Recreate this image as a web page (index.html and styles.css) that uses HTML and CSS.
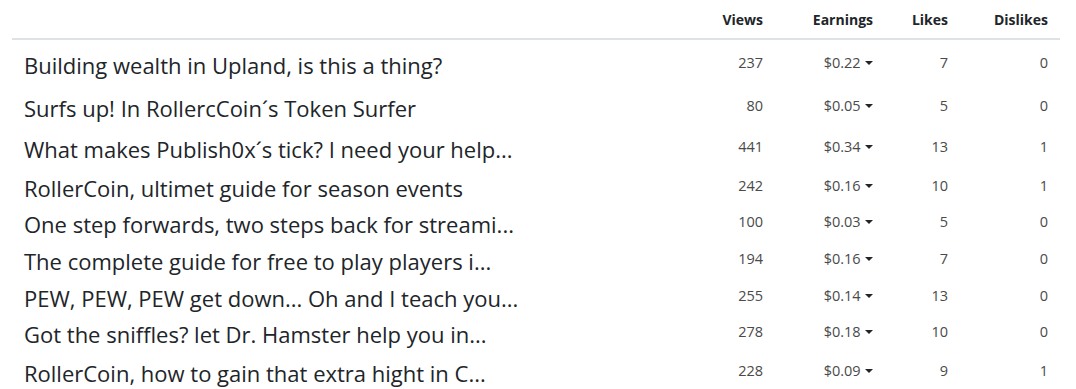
FILE: index.html
```html
<!DOCTYPE html>
<html lang="en">
<head>
<meta charset="utf-8">
<title>Posts</title>
<link rel="stylesheet" href="styles.css">
</head>
<body>
<div class="wrap">
  <table class="stats">
    <colgroup>
      <col class="c-title">
      <col class="c-views">
      <col class="c-earn">
      <col class="c-likes">
      <col class="c-dis">
    </colgroup>
    <thead>
      <tr>
        <th></th>
        <th class="num">Views</th>
        <th class="num">Earnings</th>
        <th class="num">Likes</th>
        <th class="num">Dislikes</th>
      </tr>
    </thead>
    <tbody>
      <tr><td class="title">Building wealth in Upland, is this a thing?</td><td class="num">237</td><td class="num"><span class="earn">$0.22</span></td><td class="num">7</td><td class="num">0</td></tr>
      <tr><td class="title">Surfs up! In RollercCoin´s Token Surfer</td><td class="num">80</td><td class="num"><span class="earn">$0.05</span></td><td class="num">5</td><td class="num">0</td></tr>
      <tr><td class="title">What makes Publish0x´s tick? I need your help...</td><td class="num">441</td><td class="num"><span class="earn">$0.34</span></td><td class="num">13</td><td class="num">1</td></tr>
      <tr><td class="title">RollerCoin, ultimet guide for season events</td><td class="num">242</td><td class="num"><span class="earn">$0.16</span></td><td class="num">10</td><td class="num">1</td></tr>
      <tr><td class="title">One step forwards, two steps back for streami...</td><td class="num">100</td><td class="num"><span class="earn">$0.03</span></td><td class="num">5</td><td class="num">0</td></tr>
      <tr><td class="title">The complete guide for free to play players i...</td><td class="num">194</td><td class="num"><span class="earn">$0.16</span></td><td class="num">7</td><td class="num">0</td></tr>
      <tr><td class="title">PEW, PEW, PEW get down... Oh and I teach you...</td><td class="num">255</td><td class="num"><span class="earn">$0.14</span></td><td class="num">13</td><td class="num">0</td></tr>
      <tr><td class="title">Got the sniffles? let Dr. Hamster help you in...</td><td class="num">278</td><td class="num"><span class="earn">$0.18</span></td><td class="num">10</td><td class="num">0</td></tr>
      <tr><td class="title">RollerCoin, how to gain that extra hight in C...</td><td class="num">228</td><td class="num"><span class="earn">$0.09</span></td><td class="num">9</td><td class="num">1</td></tr>
    </tbody>
  </table>
</div>
</body>
</html>
```

FILE: styles.css
```css
html, body {
  margin: 0;
  padding: 0;
  background: #ffffff;
}

body {
  font-family: "Open Sans", "Noto Sans", sans-serif;
  color: #212529;
}

.wrap {
  padding: 0 16px 0 12px;
}

.stats {
  width: 1048px;
  border-collapse: collapse;
  table-layout: fixed;
}

.c-title { width: 698px; }
.c-views { width: 65px; }
.c-earn { width: 110px; }
.c-likes { width: 75px; }
.c-dis { width: 100px; }

.stats th {
  height: 38px;
  padding: 0 12px;
  font-size: 14px;
  font-weight: 700;
  color: #212529;
  border-bottom: 2px solid #dee2e6;
  vertical-align: middle;
  text-align: left;
}

.stats td {
  padding: 0 12px;
  vertical-align: middle;
}

.stats th.num,
.stats td.num {
  text-align: right;
}

.stats td.num {
  font-size: 14.5px;
  color: #4a4a4a;
}

.stats td.title {
  font-size: 22px;
  color: #212529;
  white-space: nowrap;
  padding-top: 5px;
}

.earn::after {
  content: "";
  display: inline-block;
  margin-left: 0.3em;
  vertical-align: 0.2em;
  border-top: 0.32em solid #212529;
  border-left: 0.3em solid transparent;
  border-right: 0.3em solid transparent;
}

.stats tbody tr:nth-child(1) { height: 45px; }
.stats tbody tr:nth-child(2) { height: 42px; }
.stats tbody tr:nth-child(3) { height: 41px; }
.stats tbody tr:nth-child(4) { height: 37px; }
.stats tbody tr:nth-child(5) { height: 33px; }
.stats tbody tr:nth-child(6) { height: 38px; }
.stats tbody tr:nth-child(7) { height: 37px; }
.stats tbody tr:nth-child(8) { height: 33px; }
.stats tbody tr:nth-child(9) { height: 43px; }
```
